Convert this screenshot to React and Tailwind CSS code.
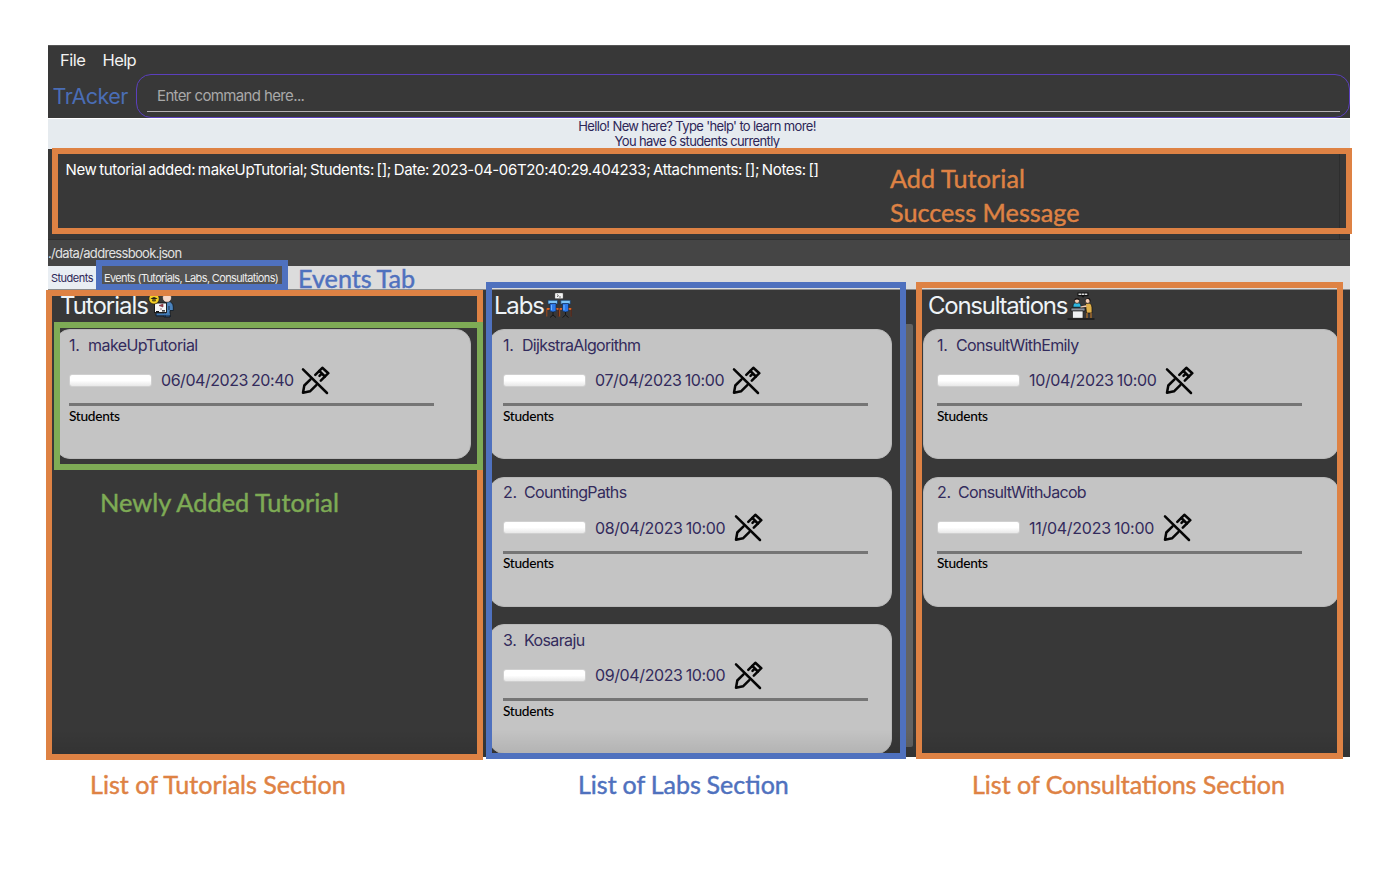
import React from "react";

const sections = [
  {
    title: "Tutorials",
    titleClass: "tracking-[-1.02px]",
    Icon: TutorialIcon,
    iconClass: "mt-[2px]",
    cardsClass: "w-[416px]",
    items: [
      { name: "makeUpTutorial", track: "tracking-[-0.56px]", date: "06/04/2023 20:40", dateTrack: "tracking-[-0.45px] mr-[7px]" },
    ],
  },
  {
    title: "Labs",
    titleClass: "tracking-[-1.2px]",
    Icon: LabIcon,
    iconClass: "ml-[2px]",
    cardsClass: "w-[403px]",
    scroll: true,
    items: [
      { name: "DijkstraAlgorithm", track: "tracking-[-0.68px]", date: "07/04/2023 10:00", dateTrack: "tracking-[-0.37px] mr-[8px]" },
      { name: "CountingPaths", track: "tracking-[-0.65px]", date: "08/04/2023 10:00", dateTrack: "tracking-[-0.39px] mr-[9px]" },
      { name: "Kosaraju", track: "tracking-[-0.62px]", date: "09/04/2023 10:00", dateTrack: "tracking-[-0.39px] mr-[9px]" },
    ],
  },
  {
    title: "Consultations",
    titleClass: "tracking-[-1.26px]",
    Icon: ConsultIcon,
    iconClass: "",
    cardsClass: "w-[416px]",
    items: [
      { name: "ConsultWithEmily", track: "tracking-[-0.63px]", date: "10/04/2023 10:00", dateTrack: "tracking-[-0.34px] mr-[8px]" },
      { name: "ConsultWithJacob", track: "tracking-[-0.68px]", date: "11/04/2023 10:00", dateTrack: "tracking-[-0.27px] mr-[9px]" },
    ],
  },
];

function TutorialIcon() {
  return (
    <svg width="26" height="26" viewBox="0 0 26 26" fill="none">
      <path d="M16 12c0-3 2-4.500 4.500-4.500S25.300 9.500 25.300 13v3.500H22V23h-6z" fill="#4b83bd" stroke="#101820" strokeWidth=".8" />
      <circle cx="19" cy="3.800" r="4.500" fill="#f5d8cb" stroke="#222" strokeWidth=".6" />
      <path d="M16 1.500h1.500M21 1.500h1.500" stroke="#6b4a3a" strokeWidth="1" />
      <path d="M17.500 17v6M21 12v4" stroke="#172a45" strokeWidth=".9" />
      <rect x="6.500" y="9" width="12" height="9.500" fill="#f5f6f8" stroke="#111" strokeWidth=".9" />
      <path d="m11 11.500 4-1.500v3zM13 14v2" fill="#a33d4b" stroke="#6c2b38" strokeWidth=".6" />
      <path d="M8 17.500h3M14 16.800h3" stroke="#111" strokeWidth="1.200" />
      <path d="M8 20.500h14" stroke="#3f78b4" strokeWidth="2" />
      <path d="M8 19v3h15" stroke="#0f1d31" strokeWidth="1" />
      <circle cx="6" cy="4.800" r="5.200" fill="#f5cf25" stroke="#18130a" strokeWidth=".6" />
      <path d="m2.500 4.500 3.500-1.400 3.700 1.400L6 5.800z" fill="#262015" />
      <path d="M4 5.500v1.500c1.300.8 2.800.8 4 0V5.500" fill="#665817" />
    </svg>
  );
}

function LabIcon() {
  return (
    <svg width="26" height="26" viewBox="0 0 26 26" fill="none">
      <rect x="9" y="0" width="8" height="5.500" rx=".7" fill="#f4f4f4" stroke="#777" strokeWidth=".4" />
      <path d="m11 1.500 1.500 1.200L11 3.900M13 4h2" stroke="#333" strokeWidth=".7" />
      <path d="M.8 23.500v-8h11.500v8M13.700 23.500v-8h11.500v8" stroke="#a94b18" strokeWidth="1" />
      <path d="M12.300 15.500v8M25.200 15.500v8" stroke="#3a2020" strokeWidth="1" />
      <path d="M2 7.300h9.500V11H2zM14.800 7.300h9.500V11h-9.500z" fill="#7cc4f7" stroke="#173a66" strokeWidth=".7" />
      <path d="M4 10.500h6v7.500q-3 2-6 0zM16.500 10.500h6v7.500q-3 2-6 0z" fill="#2c78e8" stroke="#122c59" strokeWidth=".7" />
      <path d="M5.500 12v5M18 12v5" stroke="#69b2ff" strokeWidth="1.100" />
      <path d="M1 16h2.500M10.500 16h2M14 16h2M22.700 16h2.500" stroke="#ef6b23" strokeWidth="1.500" />
      <path d="M7 19v3m-3 2.500 3-2.500 3 2.500M19.500 19v3m-3 2.500 3-2.500 3 2.500" stroke="#161616" strokeWidth="1" />
    </svg>
  );
}

function ConsultIcon() {
  return (
    <svg width="28" height="28" viewBox="0 0 28 28" fill="none">
      <path d="M10.500.5h11v3.800h-4L16 5.800l-1.500-1.500h-4z" fill="#111" />
      <path d="M11.500 2.300h9" stroke="#ddd" strokeWidth="1.500" strokeDasharray="2.600 .5" />
      <path d="M6 15.200c0-4 1.500-4.700 4-4.700s4 1 4 4.700z" fill="#2eb6df" stroke="#101820" strokeWidth=".7" />
      <circle cx="10" cy="8.900" r="2.500" fill="#f6ceb5" stroke="#111" strokeWidth=".7" />
      <path d="M7.500 8.200c-.2-2.800 5.200-2.800 5 0-1.500-1-3.500-1-5 0z" fill="#171313" />
      <path d="M18.500 12c4-2.500 6.700 0 6.500 5v4h-5.500z" fill="#e0b04a" stroke="#18130c" strokeWidth=".7" />
      <circle cx="20.700" cy="8.900" r="2.500" fill="#f6ceb5" stroke="#111" strokeWidth=".7" />
      <path d="M19.500 6.700c2.500-1.800 4.700.2 3.900 3.300-1-.4-.8-2.300-1.400-2.700z" fill="#171313" />
      <path d="m13.500 15.300 6-1.300" stroke="#f6ceb5" strokeWidth="1.500" />
      <path d="M4 16h14v3H4z" fill="#8b919b" stroke="#111" strokeWidth=".7" />
      <path d="M5.500 19H16v7.300H5.500z" fill="#eff1f2" stroke="#222" strokeWidth=".7" />
      <path d="M20 21v5m4-5v5" stroke="#a56c2c" strokeWidth="1.400" />
      <path d="M.5 27h27" stroke="#090909" strokeWidth="1" />
    </svg>
  );
}

function PencilOff() {
  return (
    <svg
      className="shrink-0"
      width="29"
      height="29"
      viewBox="0 0 29 29"
      fill="none"
      stroke="#050505"
      strokeWidth="2.500"
      strokeLinecap="round"
      strokeLinejoin="round"
    >
      <path d="M2 3.300 26 27" />
      <path d="M9.500 13.300 3.300 19.500 2 26.800l7-1.500 6.300-6.200" />
      <path d="m14.300 8.800 7-7 6 5.400-7.500 7.400" />
      <path d="m18.300 5 5.600 5.500M18.500 9.800l2-2" />
    </svg>
  );
}

function Card({ index, item }) {
  return (
    <article className="flex h-[130px] shrink-0 flex-col rounded-[15px] border border-[#b8b8b8] bg-[#c4c4c4] pl-[13px] text-[#332b5c]">
      <div className="flex h-[29px] items-center text-[16px]">
        <span className={index === 1 ? "w-[19px] tracking-[-0.3px]" : "w-[21px] tracking-[-0.3px]"}>{index}.</span>
        <span className={item.track}>{item.name}</span>
      </div>
      <div className="flex h-[42px] items-center text-[16px]">
        <div className="h-[13px] w-[83px] rounded-[3px] border border-[#d0d0d0] bg-gradient-to-b from-white from-50% to-[#e8e8e8]" />
        <span className={`ml-[9px] whitespace-nowrap [word-spacing:-1px] ${item.dateTrack}`}>{item.date}</span>
        <PencilOff />
      </div>
      <div className="mt-[2px] h-[3px] w-[365px] shrink-0 bg-[#757575]" />
      <div className="flex h-[20px] items-center font-['Lato'] text-[13.700px] font-medium tracking-[-0.3px] text-black">
        Students
      </div>
    </article>
  );
}

function Section({ section }) {
  const { Icon } = section;
  return (
    <section className="flex w-[434px] flex-col overflow-hidden">
      <h2 className="flex h-[31px] items-center pl-[12px] text-[24px] text-[#eef3f7]">
        <span className={section.titleClass}>{section.title}</span>
        <span className={section.iconClass}>
          <Icon />
        </span>
      </h2>
      <div className="flex flex-1 pl-[7px]">
        <div className={`flex flex-col gap-[17.7px] pt-[8px] ${section.cardsClass}`}>
          {section.items.map((item, i) => (
            <Card key={item.name} index={i + 1} item={item} />
          ))}
        </div>
        {section.scroll && <div className="ml-[12px] mt-[3px] h-[423px] w-[9px] rounded-[2px] bg-[#636363]" />}
      </div>
    </section>
  );
}

function Note({ className, children }) {
  return (
    <div
      className={`absolute whitespace-nowrap font-['Lato'] leading-[34px] [-webkit-text-stroke:0.45px_currentColor] ${className}`}
    >
      {children}
    </div>
  );
}

export default function App() {
  return (
    <div className="relative h-[890px] w-[1396px] overflow-hidden bg-white pl-[48px] pt-[45px] font-['Inter',sans-serif]">
      <main className="relative flex h-[712px] w-[1302px] flex-col bg-[#383838]">
        <nav className="flex h-[29px] items-center border-t border-[#555] pl-[12px] text-[16.5px] text-[#f2f2f2]">
          <span className="w-[42.5px] tracking-[-0.5px]">File</span>
          <span className="tracking-[-0.6px]">Help</span>
        </nav>
        <div className="flex h-[44px] items-stretch">
          <div className="flex w-[88px] items-center pl-[4.500px] text-[21.5px] tracking-[-0.5px] text-[#4a6db5]">TrAcker</div>
          <div className="flex flex-1 flex-col rounded-[15px] border border-[#5b3fbd] px-[9px] pl-[10px]">
            <div className="flex h-[37px] items-center border-b border-[#b5b1b5] pl-[10px] pt-[7px] text-[15px] tracking-[-0.63px] text-[#a9a9a9]">
              <span>Enter command here...</span>
            </div>
          </div>
        </div>
        <header className="flex h-[31px] flex-col items-center border-t border-white bg-[#e6ebef] pr-[4px] text-[13px] leading-[15px] text-[#2d2657]">
          <p className="tracking-[-0.64px]">Hello! New here? Type &#39;help&#39; to learn more!</p>
          <p className="tracking-[-0.64px]">You have 6 students currently</p>
        </header>
        <div className="flex h-[90px] pr-[10px]">
          <p className="flex-1 border-r border-[#2e2e2e] pl-[17.5px] pt-[11px] text-[15px] leading-[20px] tracking-[-0.36px] text-white [word-spacing:-1.1px]">
            New tutorial added: makeUpTutorial; Students: []; Date: 2023-04-06T20:40:29.404233; Attachments: []; Notes: []
          </p>
        </div>
        <div className="flex h-[27px] items-center border-t border-[#303030] bg-[#454545] pt-[2px] text-[13px] tracking-[-0.68px] text-[#e2e2e2]">
          <span>./data/addressbook.json</span>
        </div>
        <div className="flex h-[24px] border-b border-[#8b8b8b] bg-[#dcdcdc] text-[11px]">
          <div className="flex w-[51px] items-center bg-[#e9eef3] pl-[3px] pt-[2px] tracking-[-0.52px] text-[#2d2657]">Students</div>
          <div className="flex h-[20px] w-[186px] items-center bg-[#535353] pl-[5px] pt-[5px] tracking-[-0.64px] text-[#ededed]">
            Events (Tutorials, Labs, Consultations)
          </div>
        </div>
        <div className="flex h-[466px] overflow-hidden">
          {sections.map((s) => (
            <Section key={s.title} section={s} />
          ))}
        </div>
        <div className="absolute inset-x-0 bottom-0 h-[28px] bg-gradient-to-b from-transparent to-black/10" />
      </main>

      <div className="absolute left-[52px] top-[148px] h-[86px] w-[1300px] border-[6px] border-[#de8244]" />
      <div className="absolute left-[96px] top-[260px] h-[30px] w-[192px] border-[6px] border-[#4f71be]" />
      <div className="absolute left-[46px] top-[290px] h-[470px] w-[437px] border-[6px] border-[#de8244]" />
      <div className="absolute left-[54px] top-[322px] h-[148px] w-[429px] border-[6px] border-[#7eab55]" />
      <div className="absolute left-[486px] top-[282px] h-[477px] w-[420px] border-[6px] border-[#4f71be]" />
      <div className="absolute left-[916px] top-[282px] h-[477px] w-[427px] border-[6px] border-[#de8244]" />

      <Note className="left-[890px] top-[161px] text-[25.2px] text-[#de8244]">
        <span className="tracking-[0.1px]">Add Tutorial</span>
        <br />
        Success Message
      </Note>
      <Note className="left-[298px] top-[261px] text-[25.2px] [word-spacing:-1px] text-[#4f71be]">Events Tab</Note>
      <Note className="left-[100px] top-[485px] text-[25.4px] text-[#7eab55]">Newly Added Tutorial</Note>
      <Note className="left-[90px] top-[767px] text-[25.1px] text-[#de8244]">List of Tutorials Section</Note>
      <Note className="left-[578px] top-[767px] text-[25px] [word-spacing:-0.5px] text-[#4f71be]">List of Labs Section</Note>
      <Note className="left-[972px] top-[767px] text-[25px] text-[#de8244]">List of Consultations Section</Note>
    </div>
  );
}
